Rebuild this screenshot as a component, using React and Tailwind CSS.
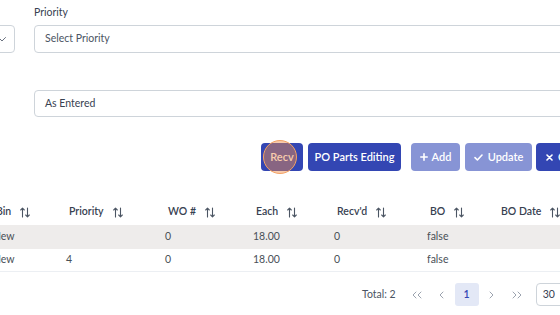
import React from 'react';

const SortIcon = () => (
    <svg width="10" height="11" viewBox="0 0 10 11" className="ml-[9px] shrink-0" fill="none" stroke="#4b5563" strokeWidth="1.1" strokeLinecap="round" strokeLinejoin="round">
        <path d="M2.5 10V1.2M0.7 3L2.5 1.2L4.3 3" />
        <path d="M7.5 1V9.8M5.7 8L7.5 9.8L9.3 8" />
    </svg>
);

const Chevron = ({ dir = 'right', double = false }) => {
    const d = dir === 'right' ? 'M1 1L4 4L1 7' : 'M4 1L1 4L4 7';
    return (
        <svg width={double ? 10 : 5} height="8" viewBox={double ? '0 0 10 8' : '0 0 5 8'} fill="none" stroke="#9ca3af" strokeWidth="1" strokeLinecap="round" strokeLinejoin="round">
            <path d={d} />
            {double && <path d={d} transform="translate(5 0)" />}
        </svg>
    );
};

const columns = ['Bin', 'Priority', 'WO #', 'Each', "Recv'd", 'BO', 'BO Date'];

const rows = [
    ['New', '', '0', '18.00', '0', 'false', ''],
    ['New', '4', '0', '18.00', '0', 'false', ''],
];

const App = () => {
    return (
        <div className="w-[560px] h-[315px] overflow-hidden bg-white font-['Lato',sans-serif] text-[10.5px] text-[#495057]">
            {/* filter fields */}
            <div className="flex gap-[19px] -ml-[185px] w-[900px] pt-[5px]">
                <div className="w-[200px] pt-[20px]">
                    <div className="h-[28px] border border-[#ced4da] rounded-[4px] flex items-center justify-end pr-[8px]">
                        <svg width="8" height="5" viewBox="0 0 8 5" fill="none" stroke="#6b7280" strokeWidth="1" strokeLinecap="round" strokeLinejoin="round">
                            <path d="M0.5 0.5L4 4L7.5 0.5" />
                        </svg>
                    </div>
                </div>
                <div className="flex-1">
                    <label className="block h-[14px] leading-[14px] mb-[6px] text-[#374151]">Priority</label>
                    <div className="h-[28px] border border-[#ced4da] rounded-[4px] flex items-center pl-[10px] text-[#4b5563]">Select Priority</div>
                    <div className="mt-[37px] h-[27px] border border-[#ced4da] rounded-[4px] flex items-center pl-[10px] text-[#374151]">As Entered</div>
                </div>
            </div>

            {/* action buttons */}
            <div className="flex mt-[26px] pl-[261px] h-[28px] w-[700px] text-white font-semibold text-[11px]">
                <button className="relative shrink-0 w-[42px] h-[28px] rounded-[4px] bg-[#3346b3]">
                    Recv
                    <span className="absolute left-[2px] top-[-3px] w-[34px] h-[34px] rounded-full border-[1.5px] border-[#f4a263] bg-[rgba(240,140,70,0.45)]"></span>
                </button>
                <button className="shrink-0 ml-[5px] w-[93px] h-[28px] rounded-[4px] bg-[#3346b3]">PO Parts Editing</button>
                <button className="shrink-0 ml-[10px] w-[49px] h-[28px] rounded-[4px] bg-[#8794d5] flex items-center justify-center gap-[4px]">
                    <svg width="8" height="8" viewBox="0 0 8 8" stroke="white" strokeWidth="1.6" strokeLinecap="round">
                        <path d="M4 0.8V7.2M0.8 4H7.2" />
                    </svg>
                    Add
                </button>
                <button className="shrink-0 ml-[5px] w-[67px] h-[28px] rounded-[4px] bg-[#8794d5] flex items-center justify-center gap-[5px]">
                    <svg width="9" height="7" viewBox="0 0 9 7" fill="none" stroke="white" strokeWidth="1.6" strokeLinecap="round" strokeLinejoin="round">
                        <path d="M1 3.6L3.4 6L8 1" />
                    </svg>
                    Update
                </button>
                <button className="shrink-0 ml-[4px] w-[60px] h-[28px] rounded-[4px] bg-[#3346b3] flex items-center pl-[10px] gap-[5px]">
                    <svg width="7" height="7" viewBox="0 0 7 7" stroke="white" strokeWidth="1.6" strokeLinecap="round">
                        <path d="M1 1L6 6M6 1L1 6" />
                    </svg>
                    Clear
                </button>
            </div>

            {/* table */}
            <div className="mt-[28px] -ml-[7px] w-[640px]">
                <div className="grid grid-cols-[73px_99px_88px_81px_93px_71px_120px] h-[26px] items-center font-semibold text-[#374151]">
                    {columns.map((c) => (
                        <div key={c} className="flex items-center pl-[3px]">
                            <span>{c}</span>
                            <SortIcon />
                        </div>
                    ))}
                </div>
                {rows.map((r, i) => (
                    <div key={i} className={`grid grid-cols-[73px_99px_88px_81px_93px_71px_120px] items-center ${i === 0 ? 'h-[24px] bg-[#eeeceb]' : 'h-[23px] border-b border-[#eceff3]'}`}>
                        {r.map((v, j) => (
                            <div key={j}>{v}</div>
                        ))}
                    </div>
                ))}
            </div>

            {/* pagination */}
            <div className="flex items-center mt-[11px] pl-[362px] h-[23px] w-[700px]">
                <span className="shrink-0 whitespace-nowrap text-[#4b5563] mr-[9px]">Total: 2</span>
                <div className="flex shrink-0 gap-[1px]">
                    <div className="w-[24px] h-[23px] flex items-center justify-center"><Chevron dir="left" double /></div>
                    <div className="w-[24px] h-[23px] flex items-center justify-center"><Chevron dir="left" /></div>
                    <div className="w-[24px] h-[23px] flex items-center justify-center rounded-[3px] bg-[#e3e8f6] text-[#3346b3] font-semibold">1</div>
                    <div className="w-[24px] h-[23px] flex items-center justify-center"><Chevron dir="right" /></div>
                    <div className="w-[24px] h-[23px] flex items-center justify-center"><Chevron dir="right" double /></div>
                </div>
                <div className="shrink-0 ml-[7px] w-[60px] h-[23px] border border-[#ced4da] rounded-[4px] flex items-center pl-[6px] text-[#374151]">30</div>
            </div>
        </div>
    );
};

export default App;
